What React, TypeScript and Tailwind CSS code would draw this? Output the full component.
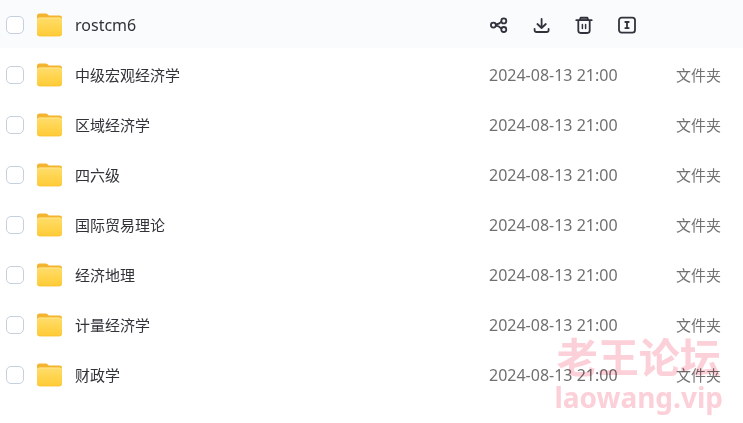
import React from "react";

const latin = "font-['Noto_Sans','Noto_Sans_CJK_SC',sans-serif]";

const folders: { name: string; modified: string; hovered?: boolean }[] = [
  { name: "rostcm6", modified: "", hovered: true },
  { name: "中级宏观经济学", modified: "2024-08-13 21:00" },
  { name: "区域经济学", modified: "2024-08-13 21:00" },
  { name: "四六级", modified: "2024-08-13 21:00" },
  { name: "国际贸易理论", modified: "2024-08-13 21:00" },
  { name: "经济地理", modified: "2024-08-13 21:00" },
  { name: "计量经济学", modified: "2024-08-13 21:00" },
  { name: "财政学", modified: "2024-08-13 21:00" },
];

function FolderIcon() {
  return (
    <svg width="26" height="24" viewBox="0 0 26 24" aria-hidden="true" className="shrink-0">
      <defs>
        <linearGradient id="folder-front" x1="0" y1="0" x2="0" y2="1">
          <stop offset="0" stopColor="#ffdd6c" />
          <stop offset="0.5" stopColor="#ffd44e" />
          <stop offset="1" stopColor="#ffcb38" />
        </linearGradient>
      </defs>
      <path d="M0 3Q0 0.5 2.5 0.5H8.6Q9.8 0.5 10.6 1.3L11.8 2.4H22.6Q25 2.4 25 4.8V12H0Z" fill="#f4b42f" />
      <path d="M0 6.8Q0 4.6 2.3 4.6H22.7Q25 4.6 25 6.8V20.8Q25 23.2 22.6 23.2H2.4Q0 23.2 0 20.8Z" fill="url(#folder-front)" />
      <path d="M0.8 7Q1 5.1 2.6 5.1H22.4Q24 5.1 24.2 7" fill="none" stroke="#ffe897" strokeWidth="0.8" />
      <path d="M0.5 21Q0.9 22.8 2.6 22.8H22.4Q24.1 22.8 24.5 21" fill="none" stroke="#f9c132" strokeWidth="0.8" />
    </svg>
  );
}

const stroke = {
  width: 20,
  height: 20,
  viewBox: "0 0 20 20",
  fill: "none",
  stroke: "currentColor",
  strokeWidth: 1.8,
  strokeLinecap: "round" as const,
  strokeLinejoin: "round" as const,
  "aria-hidden": true,
};

function ShareIcon() {
  return (
    <svg {...stroke}>
      <circle cx="4.4" cy="10.1" r="2.5" />
      <circle cx="14.8" cy="5.9" r="2.5" />
      <circle cx="14.8" cy="14.5" r="2.5" />
      <path d="M7 9.5C9 9.2 10.6 8.5 12.3 6.9M7 10.7C9 11 10.6 11.8 12.3 13.5" />
    </svg>
  );
}

function DownloadIcon() {
  return (
    <svg {...stroke}>
      <path d="M9.6 4V13M5.4 9L9.6 13L13.8 9M2.6 13.8V14.9Q2.6 17 4.7 17H14.5Q16.6 17 16.6 14.9V13.8" />
    </svg>
  );
}

function TrashIcon() {
  return (
    <svg {...stroke}>
      <path d="M4.8 5L5.8 2.6H12.2L13.2 5Z" fill="#858790" stroke="none" />
      <path d="M1.3 5.2H16.7M4.8 4.8L5.7 2.6H12.3L13.2 4.8M3.3 5.6V15.6Q3.3 18 5.7 18H12.3Q14.7 18 14.7 15.6V5.6" />
      <path d="M7.4 9.6V13.6M10.6 9.6V13.6" strokeWidth="1.5" />
    </svg>
  );
}

function RenameIcon() {
  return (
    <svg {...stroke}>
      <rect x="1" y="2.6" width="16" height="15" rx="2.6" />
      <path d="M6.6 7H11.4M9 7V13.2M6.6 13.2H11.4" strokeLinecap="butt" />
    </svg>
  );
}

const actions = [
  { label: "分享", Icon: ShareIcon },
  { label: "下载", Icon: DownloadIcon },
  { label: "删除", Icon: TrashIcon },
  { label: "重命名", Icon: RenameIcon },
];

const cell = "h-[50px] border-b-2 border-white p-0 pt-0.5 align-middle";

export default function App() {
  return (
    <main className={`relative min-h-screen overflow-hidden bg-white text-[#303238] ${latin}`}>
      <table className="w-full table-fixed border-separate border-spacing-0">
        <colgroup>
          <col className="w-9" />
          <col />
          <col className="w-[187px]" />
          <col className="w-[67px]" />
        </colgroup>
        <tbody>
          {folders.map(({ name, modified, hovered }, i) => (
            <tr key={name} className={hovered ? "bg-[#fafbfd]" : "bg-white"}>
              <td className={cell}>
                <input
                  id={`folder-${i}`}
                  type="checkbox"
                  className="ml-1.5 block size-[18px] appearance-none rounded-[5px] border border-[#c6d0dc] bg-white checked:bg-blue-500"
                />
              </td>
              <td className={cell}>
                <label htmlFor={`folder-${i}`} className="flex items-center gap-3 pl-px">
                  <FolderIcon />
                  <span className={hovered ? "text-base leading-6" : "text-[15px] leading-6"}>{name}</span>
                </label>
              </td>
              {hovered ? (
                <td className={cell} colSpan={2}>
                  <div className="flex items-center gap-[23px]">
                    {actions.map(({ label, Icon }) => (
                      <button key={label} type="button" aria-label={label} className="size-5 text-[#30333b]">
                        <Icon />
                      </button>
                    ))}
                  </div>
                </td>
              ) : (
                <>
                  <td className={`${cell} text-base leading-6 whitespace-nowrap text-[#707070]`}>{modified}</td>
                  <td className={`${cell} text-[15px] leading-6 whitespace-nowrap text-[#707070]`}>文件夹</td>
                </>
              )}
            </tr>
          ))}
        </tbody>
      </table>
      <div className="pointer-events-none absolute right-5 bottom-2.5 flex flex-col items-center gap-0.5 font-bold whitespace-nowrap text-[#fccbd4]/90 mix-blend-multiply">
        <span className="text-[41px] leading-[44px]">老王论坛</span>
        <span className="text-[28px] leading-8">laowang.vip</span>
      </div>
    </main>
  );
}
